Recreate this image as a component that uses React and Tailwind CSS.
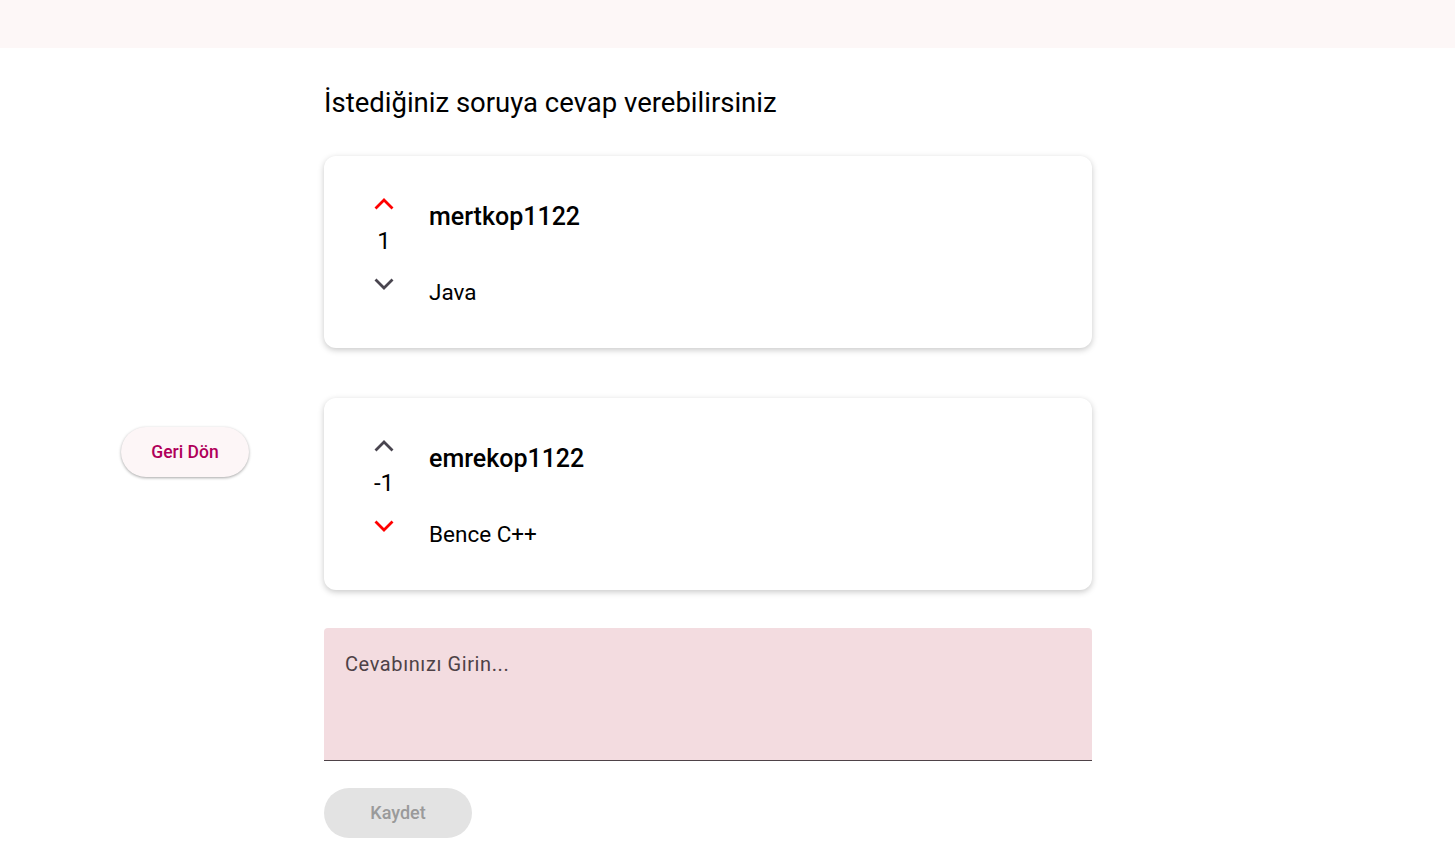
import React from 'react';

const answers = [
  { user: 'mertkop1122', text: 'Java', score: 1, vote: 'up' },
  { user: 'emrekop1122', text: 'Bence C++', score: -1, vote: 'down' },
];

function Chevron({ up, active }) {
  return (
    <svg width="24" height="24" viewBox="0 0 24 24" className={active ? 'text-[#ff0000]' : 'text-[#49454f]'}>
      <path
        d={up ? 'M3.5 16.5 12 8l8.5 8.5' : 'M3.5 7.5 12 16l8.5-8.5'}
        fill="none"
        stroke="currentColor"
        strokeWidth="2.8"
      />
    </svg>
  );
}

function AnswerCard({ answer }) {
  return (
    <div className="bg-white rounded-xl shadow-[0_2px_6px_rgba(0,0,0,0.22)] h-[192px] flex pl-[48px] pt-[36px]">
      <div className="w-[24px] flex flex-col items-center">
        <Chevron up active={answer.vote === 'up'} />
        <span className="text-[24px] leading-[30px] text-black mt-[10px]">{answer.score}</span>
        <div className="mt-[16px]">
          <Chevron active={answer.vote === 'down'} />
        </div>
      </div>
      <div className="ml-[33px] flex flex-col">
        <span className="text-[25px] font-medium leading-[32px] text-black mt-[9px]">{answer.user}</span>
        <span className="text-[22.5px] leading-[28px] text-black mt-[45px]">{answer.text}</span>
      </div>
    </div>
  );
}

export default function App() {
  return (
    <div className="min-h-screen bg-white" style={{ fontFamily: 'Roboto, "Liberation Sans", sans-serif' }}>
      <div className="h-[48px] bg-[#fdf7f7]" />

      <div className="flex">
        <div className="w-[324px] pl-[121px] pt-[379px]">
          <button className="w-[128px] h-[50px] rounded-full bg-[#fdf6f7] text-[#b0005a] text-[17.5px] font-medium shadow-[0_1px_3px_rgba(0,0,0,0.35)]">
            Geri Dön
          </button>
        </div>

        <div className="w-[768px] flex flex-col">
          <h1 className="text-[27.5px] leading-[36px] text-black mt-[37px] mb-[35px]">İstediğiniz soruya cevap verebilirsiniz</h1>

          <div className="flex flex-col gap-[50px]">
            {answers.map((a) => (
              <AnswerCard key={a.user} answer={a} />
            ))}
          </div>

          <div className="mt-[38px] h-[133px] bg-[#f3dce0] rounded-t-[4px] border-b border-[#4e4247] px-[21px] pt-[21px]">
            <span className="text-[20px] tracking-[0.6px] text-[#4e4247]">Cevabınızı Girin...</span>
          </div>

          <button className="mt-[27px] mb-[10px] w-[148px] h-[50px] rounded-full bg-[#e3e3e3] text-[#9a9a9a] text-[18px] font-medium leading-[48px]">
            Kaydet
          </button>
        </div>
      </div>
    </div>
  );
}
